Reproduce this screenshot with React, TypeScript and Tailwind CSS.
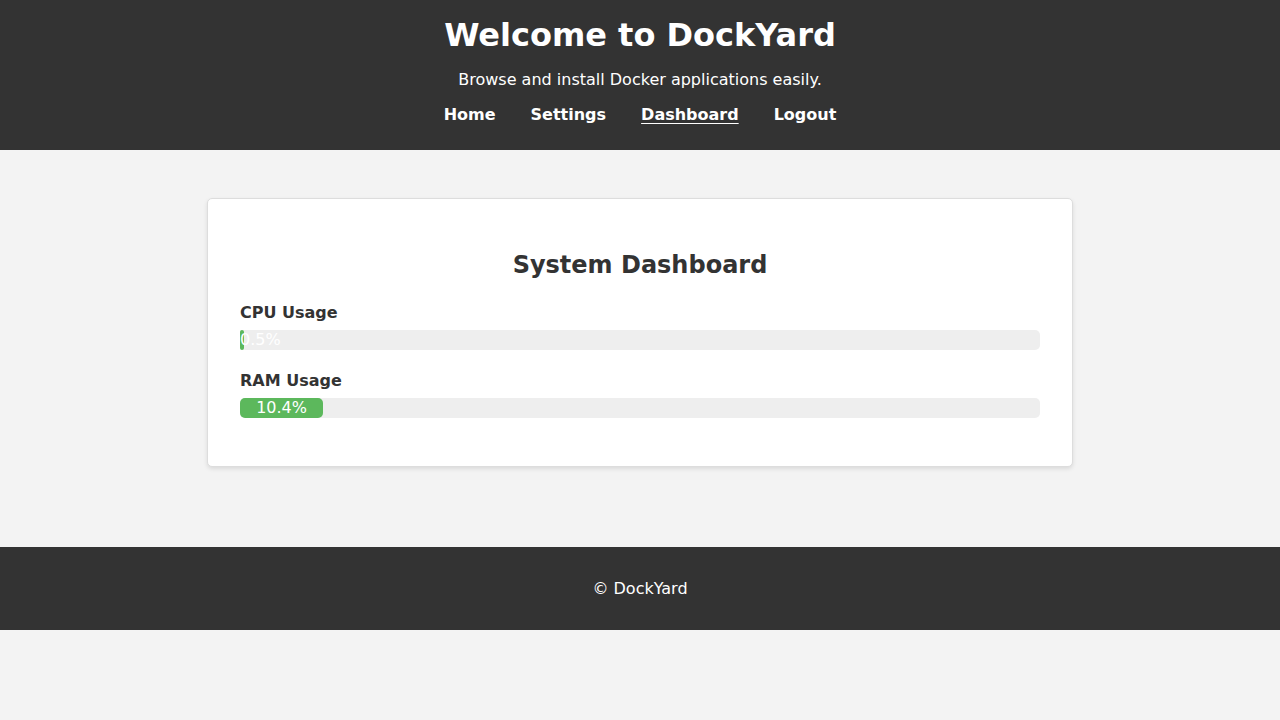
const stats = [
  { label: "CPU Usage", value: 0.5 },
  { label: "RAM Usage", value: 10.4 },
];

const links = ["Home", "Settings", "Dashboard", "Logout"];

export default function App() {
  return (
    <div className="min-h-[720px] bg-[#f3f3f3] font-['DejaVu_Sans',sans-serif] text-[#333]">
      <header className="bg-[#333] text-white text-center pt-[17px] pb-[26px]">
        <h1 className="text-[32px] font-bold leading-[37px]">Welcome to DockYard</h1>
        <p className="mt-[16px] text-[16px] leading-[19px]">Browse and install Docker applications easily.</p>
        <nav className="mt-[16px] flex justify-center gap-[35px] text-[16px] leading-[19px] font-bold">
          {links.map((link) => (
            <a
              key={link}
              href="#"
              className={link === "Dashboard" ? "underline underline-offset-[3px]" : ""}
            >
              {link}
            </a>
          ))}
        </nav>
      </header>

      <main className="pt-[48px] pb-[80px]">
        <div className="mx-auto w-[866px] bg-white border border-[#ddd] rounded-[5px] shadow-[0_2px_4px_rgba(0,0,0,0.1)] px-[32px] pt-[32px] pb-[32px]">
          <h2 className="mt-[20px] mb-[24px] text-center text-[24px] leading-[28px] font-bold">System Dashboard</h2>
          {stats.map((s, i) => (
            <div key={s.label}>
              <div className="mb-[8px] text-[16px] leading-[19px] font-bold">{s.label}</div>
              <div className={"h-5 bg-[#eee] rounded-[5px] " + (i === stats.length - 1 ? "mb-[16px]" : "mb-[21px]")}>
                <div
                  className="h-5 bg-[#5cb85c] rounded-[5px] text-white text-center text-[16px] leading-[20px] whitespace-nowrap"
                  style={{ width: `${s.value}%` }}
                >
                  {s.value}%
                </div>
              </div>
            </div>
          ))}
        </div>
      </main>

      <footer className="bg-[#333] text-white text-center py-[32px] text-[16px] leading-[19px]">
        © DockYard
      </footer>
    </div>
  );
}
